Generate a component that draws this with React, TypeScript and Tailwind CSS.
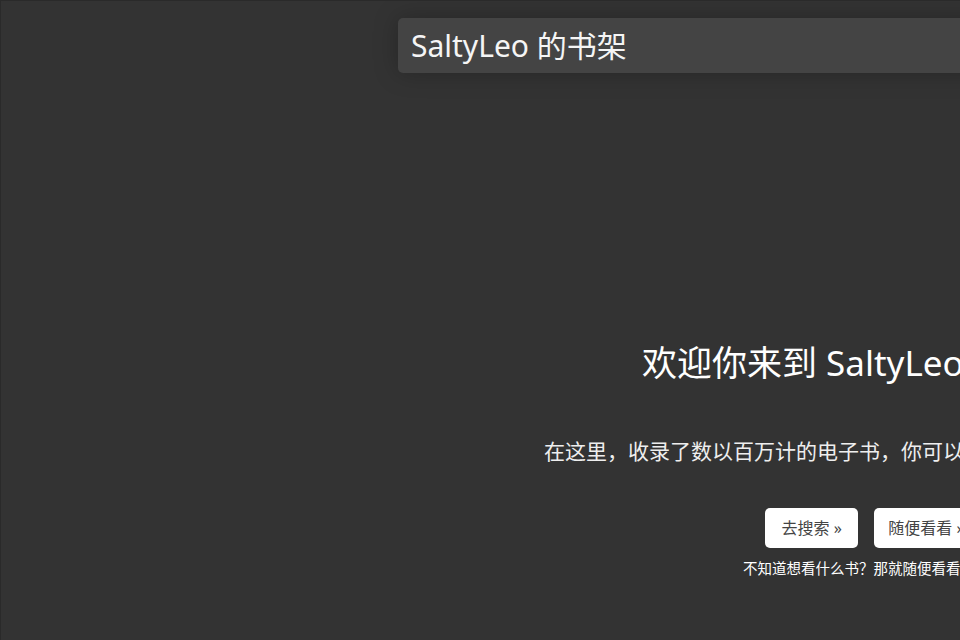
import React from 'react'

const font = { fontFamily: '"Noto Sans", "Noto Sans CJK SC", sans-serif' }

export default function App() {
  return (
    <div
      className="min-h-screen w-full overflow-hidden bg-[#333333] border-l border-t border-[#2a2a2a] text-white"
      style={font}
    >
      <header className="pl-[397px] pt-[17px]">
        <div className="flex h-[55px] w-[1124px] items-center rounded-[5px] bg-[#444444] px-[13px] shadow-[0_0_24px_rgba(0,0,0,0.25)]">
          <span className="whitespace-nowrap text-[30px] leading-none text-[#f5f5f5]">SaltyLeo 的书架</span>
        </div>
      </header>

      <main className="flex flex-col items-start whitespace-nowrap">
        <h1 className="ml-[641px] mt-[269px] text-[35px] leading-[42px] font-normal">
          欢迎你来到 SaltyLeo 的书架
        </h1>
        <p className="ml-[543px] mt-[52px] text-[21px] leading-[30px] text-[#eeeeee]">
          在这里，收录了数以百万计的电子书，你可以随意搜索和下载阅读。
        </p>
        <div className="ml-[764px] mt-[42px] flex gap-4">
          <button className="h-[40px] rounded-[5px] bg-white px-[16.5px] text-[16px] text-[#444444]">
            去搜索 »
          </button>
          <button className="h-[40px] rounded-[5px] bg-white px-[14px] text-[16px] text-[#444444]">
            随便看看 »
          </button>
        </div>
        <p className="ml-[742px] mt-[10px] text-[14.5px] leading-[20px] text-white">
          不知道想看什么书？那就随便看看吧！
        </p>
      </main>
    </div>
  )
}
